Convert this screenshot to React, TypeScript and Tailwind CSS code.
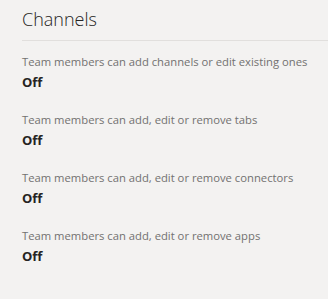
import React from "react";

const items = [
  "Team members can add channels or edit existing ones",
  "Team members can add, edit or remove tabs",
  "Team members can add, edit or remove connectors",
  "Team members can add, edit or remove apps",
];

export default function App() {
  return (
    <div
      className="w-[328px] h-[299px] bg-[#f3f2f1] pl-[22px] overflow-hidden"
      style={{ fontFamily: '"Open Sans", sans-serif' }}
    >
      <div className="pt-[6px] h-[40px] text-[18px] font-light leading-[26px] text-[#252423]">
        Channels
      </div>
      <div className="h-px bg-[#e1dfdd]" />
      <div className="flex flex-col gap-[17px] pt-[11px]">
        {items.map((t) => (
          <div key={t} className="flex flex-col">
            <div className="text-[11.25px] leading-[20px] text-[#727170]">{t}</div>
            <div className="text-[13px] font-bold leading-[21px] text-[#252423]">Off</div>
          </div>
        ))}
      </div>
    </div>
  );
}
